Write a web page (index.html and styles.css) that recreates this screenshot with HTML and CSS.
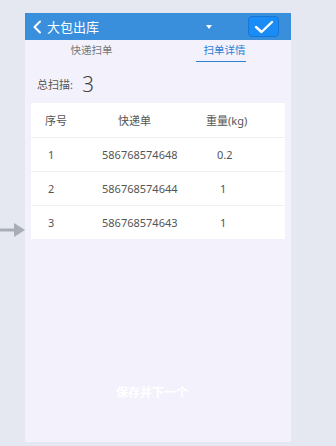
FILE: index.html
```html
<!DOCTYPE html>
<html lang="zh-CN">
<head>
  <meta charset="UTF-8">
  <meta name="viewport" content="width=device-width, initial-scale=1.0">
  <title>大包出库</title>
  <link rel="stylesheet" href="styles.css">
</head>
<body>
  <div class="pointer">
    <svg width="26" height="16" viewBox="0 0 26 16"><path d="M0 6.5h14V1l11 7-11 7V9.5H0z" fill="#a9adb5"/></svg>
  </div>

  <div class="phone">
    <header class="topbar">
      <div class="back">
        <svg width="10" height="14" viewBox="0 0 10 14"><path d="M8 1.5 2.5 7 8 12.5" fill="none" stroke="#fff" stroke-width="2" stroke-linecap="round" stroke-linejoin="round"/></svg>
        <span class="title">大包出库</span>
      </div>
      <span class="caret"></span>
      <button class="ok">
        <svg width="20" height="14" viewBox="0 0 20 14"><path d="M2 7l5.5 5L18 2" fill="none" stroke="#fff" stroke-width="2.4" stroke-linecap="round" stroke-linejoin="round"/></svg>
      </button>
    </header>

    <nav class="tabs">
      <div class="tab">快递扫单</div>
      <div class="tab active">扫单详情</div>
    </nav>

    <div class="total">
      <span class="label">总扫描:</span>
      <span class="count">3</span>
    </div>

    <div class="table">
      <div class="row head">
        <span class="c1">序号</span>
        <span class="c2">快递单</span>
        <span class="c3">重量(kg)</span>
      </div>
      <div class="row">
        <span class="c1">1</span>
        <span class="c2">586768574648</span>
        <span class="c3">0.2</span>
      </div>
      <div class="row">
        <span class="c1">2</span>
        <span class="c2">586768574644</span>
        <span class="c3 one">1</span>
      </div>
      <div class="row">
        <span class="c1">3</span>
        <span class="c2">586768574643</span>
        <span class="c3 one">1</span>
      </div>
    </div>

    <div class="footer">保存并下一个</div>
  </div>
</body>
</html>
```

FILE: styles.css
```css
body {
  margin: 0;
  background: #e5e8f0;
  font-family: "Noto Sans", "Noto Sans CJK SC", sans-serif;
  color: #555;
  height: 446px;
  overflow: hidden;
}

.pointer {
  position: absolute;
  left: 0;
  top: 221px;
}

.phone {
  width: 266px;
  height: 429px;
  margin: 13px 0 0 25px;
  background: #f3f2fc;
  display: flex;
  flex-direction: column;
}

.topbar {
  height: 27px;
  background: #3a8fdc;
  display: flex;
  align-items: center;
  padding: 0 12px 0 7px;
}

.back {
  display: flex;
  align-items: center;
  gap: 5px;
  flex: 1;
}

.title {
  color: #fff;
  font-size: 13px;
}

.caret {
  width: 0;
  height: 0;
  border-left: 3.5px solid transparent;
  border-right: 3.5px solid transparent;
  border-top: 4px solid #fff;
  margin-right: 36px;
  margin-top: 1px;
}

.ok {
  width: 31px;
  height: 21px;
  border: 1px solid #1576d6;
  border-radius: 4px;
  background: #1a8cf5;
  padding: 0;
  display: flex;
  align-items: center;
  justify-content: center;
}

.tabs {
  display: flex;
  height: 22px;
}

.tab {
  flex: 1;
  text-align: center;
  font-size: 10.5px;
  color: #777;
  padding-top: 2px;
}

.tab.active {
  color: #2c7fd3;
}

.tab.active::after {
  content: '';
  display: block;
  width: 50px;
  height: 1px;
  background: #2c7fd3;
  margin: 4px 0 0 38px;
}

.total {
  height: 41px;
  display: flex;
  align-items: center;
  padding-left: 12px;
  padding-top: 2px;
  box-sizing: border-box;
}

.total .label {
  font-size: 11px;
  color: #555;
}

.total .count {
  font-size: 21px;
  color: #444;
  margin-left: 9px;
  font-weight: 300;
}

.table {
  margin: 0 6px;
  background: #fff;
}

.row {
  display: grid;
  grid-template-columns: 58px 104px 1fr;
  height: 34px;
  align-items: center;
  font-size: 11px;
  color: #555;
  border-top: 1px solid #eef0f5;
  box-sizing: border-box;
}

.row.head {
  border-top: none;
}

.head .c1 { padding-left: 14px; }
.head .c2 { padding-left: 29px; }
.head .c3 { padding-left: 13px; }

.c1 { padding-left: 17px; }
.c2 { padding-left: 13px; }
.c3 { padding-left: 24px; }
.c3.one { padding-left: 27px; }

.footer {
  margin-top: auto;
  padding: 0 12px 42px 0;
  text-align: center;
  color: #fff;
  font-size: 12px;
  line-height: 14px;
  font-weight: bold;
}
```
